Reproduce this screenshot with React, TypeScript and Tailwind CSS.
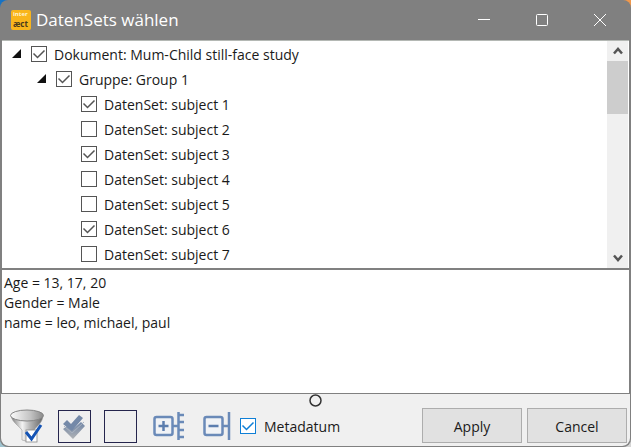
import React, { useState } from 'react';

const ROWS = [
  { id: 'doc', label: 'Dokument: Mum-Child still-face study', level: 0, checked: true },
  { id: 'group', label: 'Gruppe: Group 1', level: 1, checked: true },
  { id: 's1', label: 'DatenSet: subject 1', level: 2, checked: true },
  { id: 's2', label: 'DatenSet: subject 2', level: 2, checked: false },
  { id: 's3', label: 'DatenSet: subject 3', level: 2, checked: true },
  { id: 's4', label: 'DatenSet: subject 4', level: 2, checked: false },
  { id: 's5', label: 'DatenSet: subject 5', level: 2, checked: false },
  { id: 's6', label: 'DatenSet: subject 6', level: 2, checked: true },
  { id: 's7', label: 'DatenSet: subject 7', level: 2, checked: false },
];

const INDENT = ['pl-[7px]', 'pl-8', 'pl-[79px]'];

const METADATA = ['Age = 13, 17, 20', 'Gender = Male', 'name = leo, michael, paul'];

const CheckBox = ({ id, checked, onChange, blue = false }: {
  id: string;
  checked: boolean;
  onChange: () => void;
  blue?: boolean;
}) => (
  <span className={`grid size-4 shrink-0 ${blue ? 'text-[#0f7fd6]' : 'text-[#555555]'}`}>
    <input
      id={id}
      type="checkbox"
      checked={checked}
      onChange={onChange}
      className="peer col-start-1 row-start-1 size-4 appearance-none border border-current bg-white"
    />
    <svg
      viewBox="0 0 16 16"
      className="pointer-events-none invisible col-start-1 row-start-1 size-4 peer-checked:visible"
      fill="none"
      stroke="currentColor"
      strokeWidth="1.5"
    >
      <path d="M2.5 7.5 L6.5 11.5 L13.5 4.5" />
    </svg>
  </span>
);

const AppIcon = () => (
  <svg viewBox="0 0 20 20" className="size-5">
    <rect width="20" height="20" rx="2" fill="#f9b51c" />
    <g fontFamily="Open Sans, sans-serif" fontWeight="700">
      <text x="2" y="6" fontSize="6" fill="#fff3cf">inter</text>
      <text x="2" y="17" fontSize="8" fill="#4b3a1c">ӕct</text>
    </g>
  </svg>
);

const FilterIcon = () => (
  <svg viewBox="0 0 36 36" className="size-9">
    <defs>
      <linearGradient id="cone" x1="0" x2="1">
        <stop offset="0" stopColor="#777" />
        <stop offset="0.35" stopColor="#f4f4f4" />
        <stop offset="0.6" stopColor="#b5b5b5" />
        <stop offset="1" stopColor="#666" />
      </linearGradient>
      <linearGradient id="bowl" x1="0" x2="1">
        <stop offset="0" stopColor="#fafafa" />
        <stop offset="0.6" stopColor="#c4c4c4" />
        <stop offset="1" stopColor="#8a8a8a" />
      </linearGradient>
    </defs>
    <path d="M2 8 C4 15 9 17 13 22 V32 Q19 35 25 32 V22 C29 17 33 15 34 8Z" fill="url(#cone)" stroke="#999" strokeWidth="0.6" />
    <ellipse cx="18" cy="7.5" rx="16.5" ry="5.5" fill="url(#bowl)" stroke="#858585" />
    <rect x="17" y="22" width="11" height="12" fill="#fff" stroke="#888" strokeWidth="0.8" />
    <path d="M17 24 L22.5 31 L32 17" fill="none" stroke="#1554b5" strokeWidth="3" />
  </svg>
);

const CheckAllIcon = () => (
  <svg viewBox="0 0 33 33" className="size-[33px]">
    <defs>
      <linearGradient id="ticks" x1="0" y1="0" x2="0" y2="1">
        <stop offset="0" stopColor="#6f85a6" />
        <stop offset="1" stopColor="#b0b2b5" />
      </linearGradient>
    </defs>
    <rect x="0.5" y="0.5" width="32" height="32" fill="#efefef" stroke="#25254d" />
    <path d="M5 19 L9 16 L14 20 L23 12 L27 16 L15 29Z" fill="url(#ticks)" />
    <path d="M5 14 L9 10 L13 14 L21 5 L25 8 L14 21Z" fill="#7489a8" />
    <path d="M6 16 L14 23 L26 12" fill="none" stroke="#a9b3c1" strokeWidth="1" />
  </svg>
);

const UncheckAllIcon = () => (
  <svg viewBox="0 0 33 33" className="size-[33px]">
    <rect x="0.5" y="0.5" width="32" height="32" fill="#efefef" stroke="#25254d" />
  </svg>
);

const ExpandIcon = () => (
  <svg viewBox="0 0 32 30" className="h-[30px] w-8" fill="none" stroke="#6a8ab8">
    <rect x="1.5" y="6" width="18" height="18" rx="2" strokeWidth="2.5" fill="#f1f3f6" />
    <path d="M5.5 15 H15.5 M10.5 10 V20" strokeWidth="2.5" stroke="#5c7eaf" />
    <path d="M20 15 H26 M25.5 1 V29" strokeWidth="2.5" />
    <path d="M26 4 H31 M26 11 H31 M26 19 H31 M26 26 H31" strokeWidth="2.5" />
  </svg>
);

const CollapseIcon = () => (
  <svg viewBox="0 0 28 30" className="h-[30px] w-7" fill="none" stroke="#6a8ab8">
    <rect x="1.5" y="6" width="18" height="18" rx="2" strokeWidth="2.5" fill="#f1f3f6" />
    <path d="M5.5 15 H15.5" strokeWidth="2.5" stroke="#5c7eaf" />
    <path d="M20 15 H26 M26 1 V29" strokeWidth="2.5" />
  </svg>
);

const ScrollArrow = ({ down = false }: { down?: boolean }) => (
  <button aria-label={down ? 'Scroll down' : 'Scroll up'} className="flex h-5 items-center justify-center text-[#555555]">
    <svg viewBox="0 0 10 8" className={`h-2 w-2.5 ${down ? 'rotate-180' : ''}`} fill="none" stroke="currentColor" strokeWidth="2.5">
      <path d="M1 6.5 L5 2 L9 6.5" />
    </svg>
  </button>
);

const App = () => {
  const [rows, setRows] = useState(ROWS);
  const [showMeta, setShowMeta] = useState(true);

  const toggle = (id: string) =>
    setRows(rows.map((r) => (r.id === id ? { ...r, checked: !r.checked } : r)));
  const setAll = (checked: boolean) => setRows(rows.map((r) => ({ ...r, checked })));

  return (
    <div className="h-screen bg-[conic-gradient(#f0984c_25%,#d5d5d5_25%_50%,#9fc3cf_50%_75%,#1672c4_75%)] font-['Open_Sans',sans-serif] text-sm text-[#1a1a1a]">
      <div className="flex h-full flex-col overflow-hidden rounded-lg border-b border-[#808080] bg-[#808080]">
        {/* Title bar */}
        <header className="flex h-10 shrink-0 items-center pl-[11px] text-white">
          <AppIcon />
          <h1 className="ml-[5px] grow text-[17px]">DatenSets wählen</h1>
          <button aria-label="Minimize" className="flex h-10 w-[58px] items-center justify-center">
            <svg viewBox="0 0 12 12" className="size-3" stroke="currentColor"><path d="M0 5.5 H12" /></svg>
          </button>
          <button aria-label="Maximize" className="flex h-10 w-[58px] items-center justify-center">
            <svg viewBox="0 0 12 12" className="size-3" fill="none" stroke="currentColor"><rect x="0.5" y="0.5" width="11" height="11" rx="1" /></svg>
          </button>
          <button aria-label="Close" className="mr-0.5 flex h-10 w-[58px] items-center justify-center">
            <svg viewBox="0 0 12 12" className="size-3" stroke="currentColor"><path d="M0 0 L12 12 M12 0 L0 12" /></svg>
          </button>
        </header>

        {/* Tree */}
        <div className="mx-0.5 flex min-h-0 flex-1 border-t border-[#b4b8b4] bg-white">
          <ul className="grow overflow-hidden">
            {rows.map((row) => (
              <li key={row.id} className={`flex h-[25px] items-center ${INDENT[row.level]}`}>
                {row.level < 2 && (
                  <button aria-label="Collapse" className="mr-[7px] flex h-4 w-[15px] items-center justify-center">
                    <svg viewBox="0 0 9 9" className="size-[9px]"><path d="M9 0 V9 H0Z" fill="#111" /></svg>
                  </button>
                )}
                <CheckBox id={row.id} checked={row.checked} onChange={() => toggle(row.id)} />
                <label htmlFor={row.id} className="pt-0.5 pl-[7px] whitespace-nowrap">{row.label}</label>
              </li>
            ))}
          </ul>
          <div className="mr-px flex w-[21px] shrink-0 flex-col bg-[#f0f0f0]">
            <ScrollArrow />
            <div className="flex-1"><div className="h-[53px] bg-[#cdcdcd]" /></div>
            <ScrollArrow down />
          </div>
        </div>

        {/* Metadata of the selected sets */}
        <div className="mx-0.5 mt-0.5 h-[123px] shrink-0 bg-white pt-[3px] pl-0.5 leading-5">
          {showMeta && METADATA.map((line) => <p key={line}>{line}</p>)}
        </div>

        {/* Splitter handle and buttons */}
        <footer className="mx-px mt-px shrink-0 rounded-b-lg bg-[#f0f0f0]">
          <div className="flex h-[13px] items-center justify-center">
            <svg viewBox="0 0 13 13" className="size-[13px]"><circle cx="6.5" cy="6.5" r="5.5" fill="none" stroke="#333" strokeWidth="1.5" /></svg>
          </div>
          <div className="flex h-[39px] items-center pr-[3px] pb-0.5 pl-2">
            <button aria-label="Filter"><FilterIcon /></button>
            <button aria-label="Check all" className="ml-[13px] pt-0.5" onClick={() => setAll(true)}><CheckAllIcon /></button>
            <button aria-label="Uncheck all" className="ml-[13px] pt-0.5" onClick={() => setAll(false)}><UncheckAllIcon /></button>
            <button aria-label="Expand all" className="ml-4"><ExpandIcon /></button>
            <button aria-label="Collapse all" className="ml-[18px]"><CollapseIcon /></button>
            <div className="ml-[9px] flex grow items-center">
              <CheckBox id="meta" blue checked={showMeta} onChange={() => setShowMeta(!showMeta)} />
              <label htmlFor="meta" className="pt-0.5 pl-2">Metadatum</label>
            </div>
            <button className="mr-[5px] h-[35px] w-[100px] border border-[#adadad] bg-[#e1e1e1] pt-0.5">Apply</button>
            <button className="h-[35px] w-[100px] border border-[#adadad] bg-[#e1e1e1] pt-0.5">Cancel</button>
          </div>
        </footer>
      </div>
    </div>
  );
};

export default App;
